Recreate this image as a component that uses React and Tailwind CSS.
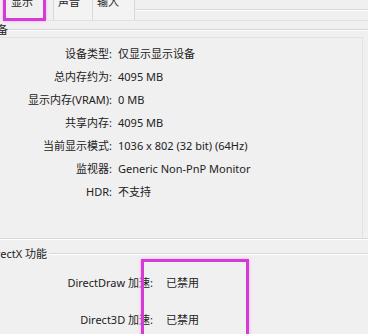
export default function App() {
  const rows = [
    ["设备类型:", "仅显示显示设备"],
    ["总内存约为:", "4095 MB"],
    ["显示内存(VRAM):", "0 MB"],
    ["共享内存:", "4095 MB"],
    ["当前显示模式:", "1036 x 802 (32 bit) (64Hz)"],
    ["监视器:", "Generic Non-PnP Monitor"],
    ["HDR:", "不支持"],
  ];
  return (
    <div
      className="relative w-[368px] h-[334px] overflow-hidden bg-[#f0f0f0] text-[11px] text-[#222222]"
      style={{ fontFamily: '"Noto Sans", "Noto Sans CJK SC", sans-serif' }}
    >
      {/* tab strip */}
      <div className="flex h-[21px]">
        <div className="w-[48px] shrink-0 flex justify-center">
          <span className="-mt-[4px] leading-[11px] ml-[-4px]">显示</span>
        </div>
        <div className="flex flex-1 border-b border-[#e2e2e2]">
          <div className="w-[5px] shrink-0" />
          <div className="w-[40px] shrink-0 border-l border-r border-[#d9d9d9] bg-[#f3f3f3] pl-[4px]">
            <span className="block -mt-[4px] leading-[11px]">声音</span>
          </div>
          <div className="w-[42px] shrink-0 border-r border-[#d9d9d9] bg-[#f3f3f3] pl-[4px]">
            <span className="block -mt-[4px] leading-[11px]">输入</span>
          </div>
          <div className="flex-1">
            <div className="h-[10px] border-b border-[#d6d6d6]" />
            <div className="h-px bg-white" />
          </div>
        </div>
      </div>

      {/* group 1 title line */}
      <div className="flex items-center h-[12px] mt-[3px]">
        <span className="ml-[-3px] leading-[12px]">备</span>
        <div className="flex-1 flex flex-col">
          <div className="h-px bg-[#d4d4d4]" />
          <div className="h-px bg-white" />
        </div>
      </div>

      {/* group 1 body */}
      <div className="mt-[1px] mr-[5px] h-[201px] border-t border-r border-[#e2e2e2]">
        <div className="pt-[4px] grid grid-cols-[112px_1fr] gap-x-[6px]">
          {rows.map(([k, v]) => (
            <div key={k} className="contents">
              <div className="text-right leading-[23px] whitespace-nowrap">{k}</div>
              <div className="leading-[23px] whitespace-nowrap">{v}</div>
            </div>
          ))}
        </div>
      </div>
      <div className="h-px bg-[#d8d8d8]" />
      <div className="h-px bg-white" />

      {/* DirectX title line */}
      <div className="flex items-center h-[12px] mt-[8px]">
        <span className="ml-[-15px] leading-[12px] whitespace-nowrap">DirectX 功能</span>
        <div className="flex-1 flex flex-col ml-[2px]">
          <div className="h-px bg-[#d8d8d8]" />
          <div className="h-px bg-white" />
        </div>
      </div>

      <div className="mt-[13px] grid grid-cols-[153px_1fr] gap-x-[13px] gap-y-[17px]">
        <div className="text-right leading-[20px] whitespace-nowrap">DirectDraw 加速:</div>
        <div className="leading-[20px]">已禁用</div>
        <div className="text-right leading-[20px] whitespace-nowrap">Direct3D 加速:</div>
        <div className="leading-[20px]">已禁用</div>
      </div>

      {/* annotation boxes */}
      <div className="absolute left-[3px] top-[-4px] w-[43px] h-[25px] border-[3px] border-[#d53ad5] shadow-[0_0_3px_#f2a6f2]" />
      <div className="absolute left-[141px] top-[259px] w-[108px] h-[90px] border-[3px] border-[#d53ad5] shadow-[0_0_3px_#f2a6f2]" />
    </div>
  );
}
